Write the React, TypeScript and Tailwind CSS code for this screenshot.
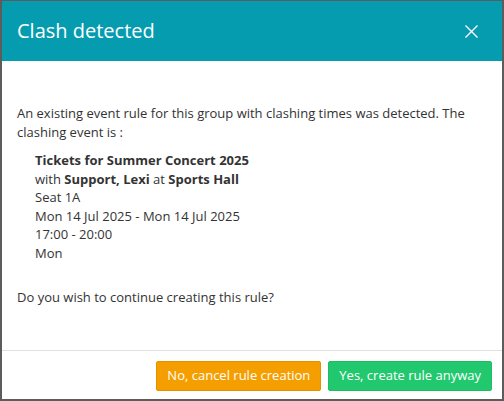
import React from "react";

export default function App() {
  const font = { fontFamily: '"Open Sans", "Noto Sans", sans-serif' };
  return (
    <div className="w-[504px] h-[401px] bg-[#5c5c5c] pt-[1px] pl-[2px] overflow-hidden" style={font}>
      <div className="w-[500px] h-[398px] bg-white flex flex-col">
        <div className="h-[60px] bg-[#069cb0] flex items-center justify-between pl-[15px] pr-[24px]">
          <span className="text-white text-[20px] leading-none">Clash detected</span>
          <svg width="13" height="13" viewBox="0 0 13 13" className="mt-[1px]">
            <path d="M0.5 0.5 L12.5 12.5 M12.5 0.5 L0.5 12.5" stroke="white" strokeWidth="1.4" fill="none" />
          </svg>
        </div>
        <div className="flex-1 px-[15px] pt-[43px] text-[13px] leading-[18.5px] text-[#333]">
          <p>An existing event rule for this group with clashing times was detected. The clashing event is :</p>
          <div className="pl-[18px] mt-[10px]">
            <div className="font-bold">Tickets for Summer Concert 2025</div>
            <div>
              with <span className="font-bold">Support, Lexi</span> at <span className="font-bold">Sports Hall</span>
            </div>
            <div>Seat 1A</div>
            <div>Mon 14 Jul 2025 - Mon 14 Jul 2025</div>
            <div>17:00 - 20:00</div>
            <div>Mon</div>
          </div>
          <p className="mt-[26px]">Do you wish to continue creating this rule?</p>
        </div>
        <div className="border-t border-[#dfe1e6] h-[49px] flex items-start justify-end gap-[7px] pt-[10px] pr-[10px]">
          <button className="h-[30px] px-[10px] bg-[#f59e00] border border-[#e39200] rounded-[2px] text-white text-[13px]">
            No, cancel rule creation
          </button>
          <button className="h-[30px] px-[10px] bg-[#22c86e] border border-[#1fbb66] rounded-[2px] text-white text-[13px]">
            Yes, create rule anyway
          </button>
        </div>
      </div>
    </div>
  );
}
